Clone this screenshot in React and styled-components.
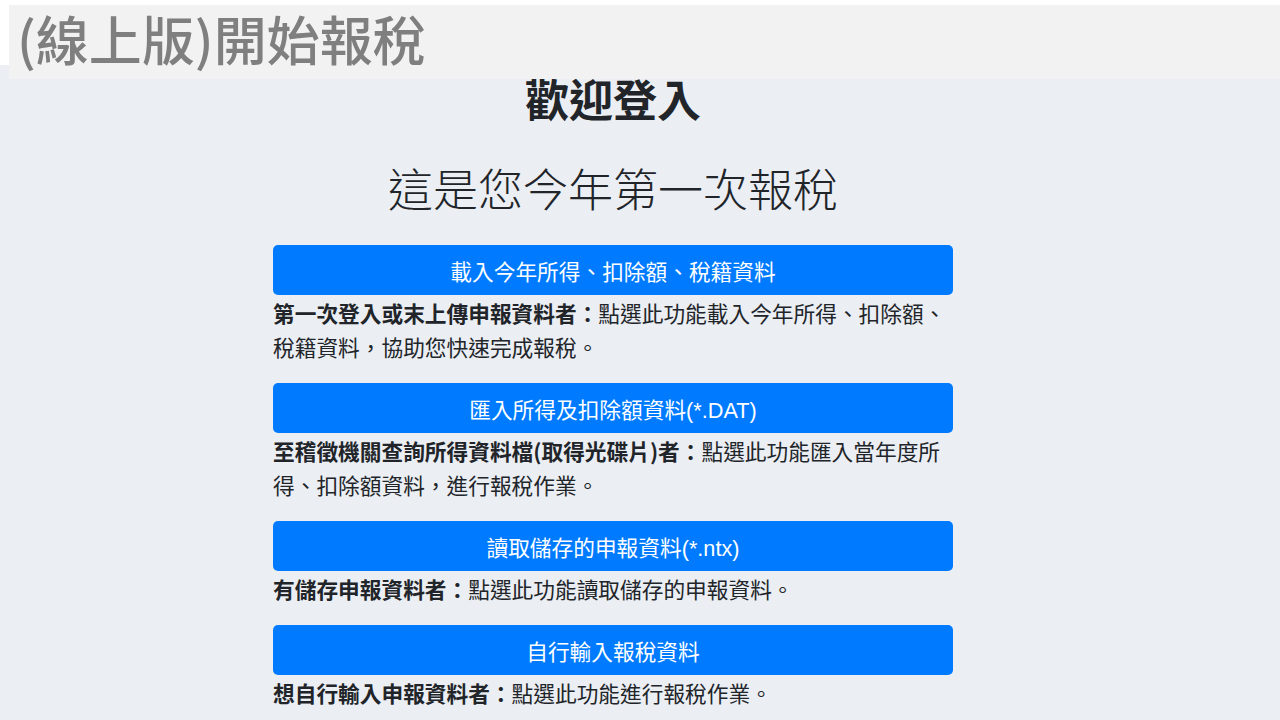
import styled, { createGlobalStyle } from 'styled-components'

const GlobalStyle = createGlobalStyle`
    html, body {
        margin: 0;
        padding: 0;
        background: #ffffff;
        font-family: "Liberation Sans", "Noto Sans CJK TC", sans-serif;
        color: #212529;
    }
`

// Header banner
const Header = styled.header`
    padding: 5px 0 0 9px;
    height: 60px;
    background: #ffffff;
`
const Banner = styled.div`
    position: relative;
    z-index: 1;
    height: 74px;
    padding-left: 8px;
    background: #f2f2f2;
    box-sizing: border-box;
`
const BannerTitle = styled.h1`
    margin: 0;
    font-family: "Noto Sans CJK TC", sans-serif;
    font-size: 53px;
    font-weight: 500;
    line-height: 66px;
    color: #7f7f7f;
`

// Main
const Main = styled.main`
    min-height: 655px;
    background: #ebeef3;
    padding: 13px 54px 0 0;
    display: flex;
    justify-content: center;
    box-sizing: border-box;
`
const Column = styled.div`
    width: 680px;
    display: flex;
    flex-direction: column;
    align-items: stretch;
`
const Welcome = styled.h2`
    margin: 0;
    text-align: center;
    font-family: "Noto Sans CJK TC", sans-serif;
    font-size: 44px;
    font-weight: 700;
    line-height: 40px;
    color: #212529;
`
const Subtitle = styled.h3`
    margin: 43px 0 30px;
    text-align: center;
    font-family: "Noto Sans CJK TC", sans-serif;
    font-size: 45px;
    font-weight: 300;
    line-height: 54px;
    color: #212529;
`
const Option = styled.section`
    margin-bottom: 19px;
`
const Button = styled.button`
    display: block;
    width: 100%;
    height: 50px;
    border: none;
    border-radius: 5px;
    background: #007bff;
    color: #ffffff;
    font-family: "Liberation Sans", "Noto Sans CJK TC", sans-serif;
    font-size: 21.7px;
    cursor: pointer;
`
const Desc = styled.p`
    margin: 1px 0 0;
    font-family: "Noto Sans CJK TC", sans-serif;
    font-size: 21.7px;
    line-height: 34px;
    color: #212529;
    strong {
        font-weight: 700;
    }
`

const options = [
    {
        label: '載入今年所得、扣除額、稅籍資料',
        who: '第一次登入或末上傳申報資料者：',
        text: '點選此功能載入今年所得、扣除額、稅籍資料，協助您快速完成報稅。',
    },
    {
        label: '匯入所得及扣除額資料(*.DAT)',
        who: '至稽徵機關查詢所得資料檔(取得光碟片)者：',
        text: '點選此功能匯入當年度所得、扣除額資料，進行報稅作業。',
    },
    {
        label: '讀取儲存的申報資料(*.ntx)',
        who: '有儲存申報資料者：',
        text: '點選此功能讀取儲存的申報資料。',
    },
    {
        label: '自行輸入報稅資料',
        who: '想自行輸入申報資料者：',
        text: '點選此功能進行報稅作業。',
    },
]

const App = () => {
    return (
        <>
            <GlobalStyle />
            <Header>
                <Banner>
                    <BannerTitle>(線上版)開始報稅</BannerTitle>
                </Banner>
            </Header>
            <Main>
                <Column>
                    <Welcome>歡迎登入</Welcome>
                    <Subtitle>這是您今年第一次報稅</Subtitle>
                    {options.map((o) => (
                        <Option key={o.label}>
                            <Button>{o.label}</Button>
                            <Desc><strong>{o.who}</strong>{o.text}</Desc>
                        </Option>
                    ))}
                </Column>
            </Main>
        </>
    )
}

export default App
